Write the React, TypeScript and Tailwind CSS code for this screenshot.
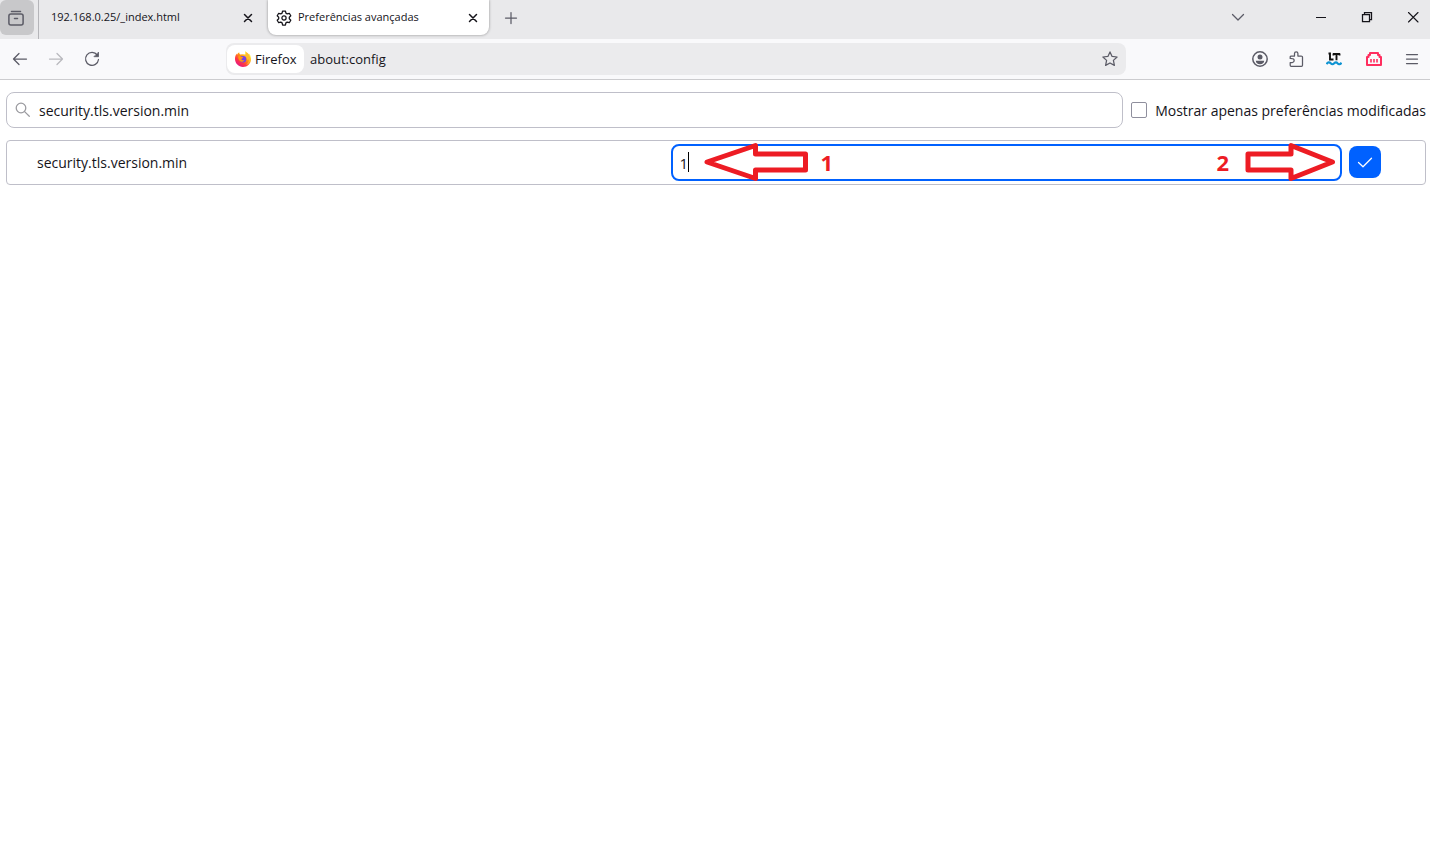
import { useState } from "react";
import type { ReactNode } from "react";

type IconProps = { className?: string; children: ReactNode };

function Icon({ className = "size-4", children }: IconProps) {
  return (
    <svg viewBox="0 0 16 16" className={className} fill="none" stroke="currentColor"
      strokeWidth="1.25" strokeLinecap="round" strokeLinejoin="round" aria-hidden="true">
      {children}
    </svg>
  );
}

function FirefoxLogo() {
  return (
    <svg viewBox="0 0 16 16" className="size-4 shrink-0" aria-hidden="true">
      <defs>
        <linearGradient id="flame" x1="0.85" y1="0.1" x2="0.2" y2="0.95">
          <stop offset="0.1" stopColor="#fff44f" />
          <stop offset="0.4" stopColor="#ff980e" />
          <stop offset="0.7" stopColor="#ff3647" />
          <stop offset="1" stopColor="#e31587" />
        </linearGradient>
      </defs>
      <path fill="url(#flame)" d="M10.3 0c-.5 1.3-.2 2.5.7 3.500l-3.400-.3-2.400.4C4.400 3 4.200 2.200 4.300 1.300 3.300 1.900 2.500 2.800 2 3.700 1.700 3.300 1.600 2.900 1.600 2.400.4 4.200 0 6.200 0 8.100 0 12.500 3.600 16 8 16s8-3.500 8-8c0-2.300-.8-4.200-2.100-5.400.1.500.1.900 0 1.300C13.200 2.200 11.300 1.600 10.300 0z" />
      <circle cx="8" cy="8.300" r="3.300" fill="#7542e5" />
      <path fill="#ff980e" d="M3.300 5.200c1.100-.5 2.300-.2 3 .7.800.1 1.700.1 1.900.3 0 .9-1.500 1.200-1.800 1.800.2 1.300 1.600 1.500 3 .9-.5 1.500-2.200 2.300-3.700 1.600C4.100 9.800 3 7.600 3.300 5.200z" />
      <path fill="#ffbd2e" d="M9.500 4.400c2 .5 3 2 2.700 4.700 1-.7 1.300-1.700 1.200-2.700 1.300 2.800.2 6-2.700 7.400 3.700-.6 5.200-3.900 4.400-6.900-.3-2.600-1.500-4.600-4.300-5.900 0 1.600.2 2.500-1.300 3.400z" />
    </svg>
  );
}

function LanguageToolLogo() {
  return (
    <svg viewBox="0 0 16 16" className="size-4" fill="none" aria-hidden="true">
      <path d="M2.500 2.500h1.500v6h3.500M7 3h7M10.500 3v6.200M7.500 2.500v2M13.500 2.500v2" stroke="#111" strokeWidth="1.900" />
      <path d="M.5 13c1.500-2 3-2 4.200-.7s2.300 1.300 3.500 0 2.400-1.300 3.400 0 2.400 1.200 4-.5" stroke="#0d93d2" strokeWidth="2.100" />
    </svg>
  );
}

function ContainerLogo() {
  return (
    <svg viewBox="0 0 16 16" className="size-4" fill="none" stroke="#ff2e5f" aria-hidden="true">
      <path d="M1 14V6h1.500V4H4V2h8v2h1.500v2H15v8z" strokeWidth="2" strokeLinejoin="round" />
      <path d="M5 8v3.500M8 8v3.500M11 8v3.500" strokeWidth="1.600" />
    </svg>
  );
}

function TabStrip() {
  return (
    <div className="flex h-[39px] items-start bg-[#e9e9eb] text-[11px] text-[#15141a]">
      <button aria-label="Histórico de abas" className="flex h-[35px] w-[34px] shrink-0 items-center justify-center rounded-md bg-[#c8c8ca] pr-0.5 text-[#5b5b66]">
        <Icon>
          <path d="M3.500 1.500h9" strokeWidth="1.500" />
          <rect x="0.900" y="4" width="14.200" height="11" rx="2" strokeWidth="1.500" />
          <path d="M6.500 8.500h3" strokeWidth="1.500" />
        </Icon>
      </button>
      <div className="ml-1 h-[39px] w-px shrink-0 bg-[#b5b5b9]" />
      <div className="flex h-[35px] w-[228px] items-center pr-[11px] pl-3">
        <span className="flex-1 truncate">192.168.0.25/_index.html</span>
        <button aria-label="Fechar aba">
          <Icon><path d="M4.500 4.500l7 7M11.500 4.500l-7 7" strokeWidth="1.500" /></Icon>
        </button>
      </div>
      <div className="ml-px flex h-[35px] w-[221px] items-center gap-1.5 rounded-b-lg bg-white px-2 shadow-[0_0_3px_rgba(0,0,0,0.4)]">
        <Icon>
          <path d="M6.600 1h2.800l.5 2.100 1.300.8 2.100-.6 1.500 2.500-1.500 1.500v1.400l1.500 1.500-1.500 2.500-2.100-.6-1.300.8L9.400 15H6.600l-.5-2.100-1.300-.8-2.100.6-1.500-2.500 1.500-1.500V7.300L1.200 5.800l1.500-2.500 2.100.6 1.300-.8z" />
          <circle cx="8" cy="8" r="2.100" />
        </Icon>
        <span className="flex-1 truncate">Preferências avançadas</span>
        <button aria-label="Fechar aba">
          <Icon><path d="M4.500 4.500l7 7M11.500 4.500l-7 7" strokeWidth="1.500" /></Icon>
        </button>
      </div>
      <button aria-label="Nova aba" className="ml-1 flex h-[35px] w-[35px] items-center justify-center text-[#5b5b66]">
        <Icon><path d="M8 2.500v11M2.500 8h11" /></Icon>
      </button>
      <button aria-label="Listar abas" className="mr-[42px] ml-auto flex h-[33px] w-9 items-center justify-center text-[#5b5b66]">
        <Icon><path d="M2.500 5.500L8 11l5.500-5.500" /></Icon>
      </button>
      <button aria-label="Minimizar" className="flex h-[33px] w-[46px] items-center justify-center">
        <Icon><path d="M3 8.500h10" strokeWidth="1" strokeLinecap="butt" /></Icon>
      </button>
      <button aria-label="Restaurar" className="flex h-[33px] w-[46px] items-center justify-center">
        <Icon><path d="M3.500 5.500h7v7h-7zM5.500 5.500v-2h7v7h-2" strokeLinejoin="miter" /></Icon>
      </button>
      <button aria-label="Fechar" className="flex h-[33px] w-10 items-center justify-center pl-1.5">
        <Icon><path d="M3.500 3.500l9.500 9.500M13 3.500L3.500 13" strokeWidth="1.100" /></Icon>
      </button>
    </div>
  );
}

function Toolbar() {
  return (
    <div className="flex h-[41px] items-center border-b border-[#cccccf] bg-[#f9f9fb] pl-0.5 text-[#5b5b66]">
      <button aria-label="Voltar" className="flex h-8 w-9 items-center justify-center">
        <Icon><path d="M14.500 8h-13M7 2.500L1.500 8 7 13.500" /></Icon>
      </button>
      <button aria-label="Avançar" disabled className="flex h-8 w-9 items-center justify-center text-[#b9b9be]">
        <Icon><path d="M1.500 8h13M9 2.500L14.500 8 9 13.500" /></Icon>
      </button>
      <button aria-label="Recarregar" className="flex h-8 w-9 items-center justify-center">
        <Icon>
          <path d="M13.300 4A6.500 6.500 0 1 0 14.500 8.500" />
          <path d="M14.500 1.500v4.200h-4.200z" fill="currentColor" strokeWidth="0.800" />
        </Icon>
      </button>
      <div className="mx-[116px] flex h-8 flex-1 items-center rounded-lg bg-[#ebebed] pr-2 pl-px text-[13px] text-[#15141a]">
        <button className="flex h-7 w-[77px] items-center gap-1 rounded-lg bg-white pl-2">
          <FirefoxLogo />
          <span className="pt-0.5">Firefox</span>
        </button>
        <input aria-label="Endereço" defaultValue="about:config" className="ml-1.5 min-w-0 flex-1 bg-transparent pt-0.5 outline-none" />
        <button aria-label="Adicionar aos favoritos" className="text-[#5b5b66]">
          <Icon><path d="M8 .9l2.100 4.500 5 .6-3.700 3.400 1 5L8 12l-4.400 2.400 1-5L.9 6l5-.6z" /></Icon>
        </button>
      </div>
      <button aria-label="Conta" className="flex h-8 w-9 items-center justify-center">
        <Icon>
          <circle cx="8" cy="8" r="7.200" strokeWidth="1.500" />
          <circle cx="8" cy="6" r="2.500" fill="currentColor" stroke="none" />
          <path d="M3.800 9.700h8.400c0 2.100-1.800 3.500-4.200 3.500s-4.200-1.400-4.200-3.500z" fill="currentColor" stroke="none" />
        </Icon>
      </button>
      <button aria-label="Extensões" className="flex h-8 w-9 items-center justify-center">
        <Icon><path d="M2.200 7.500V6a1 1 0 0 1 1-1H6.500V2.600a1.700 1.700 0 0 1 3.400 0V5h3.300a1.300 1.300 0 0 1 1.300 1.300v8a1 1 0 0 1-1 1H3.200a1 1 0 0 1-1-1v-2.800h2a1.900 1.900 0 0 0 0-3.900z" /></Icon>
      </button>
      <button aria-label="LanguageTool" className="flex h-8 w-10 items-center justify-center">
        <LanguageToolLogo />
      </button>
      <button aria-label="Extensão" className="flex h-8 w-10 items-center justify-center">
        <ContainerLogo />
      </button>
      <button aria-label="Menu" className="flex h-8 w-9 items-center justify-center">
        <Icon><path d="M2.500 3.500h11M2.500 8h11M2.500 12.500h11" /></Icon>
      </button>
    </div>
  );
}

function PrefRow({ name }: { name: string }) {
  const [value, setValue] = useState("1");

  return (
    <tr>
      <th scope="row" className="w-[46.8%] pl-[30px] text-left font-normal">{name}</th>
      <td>
        <div className="flex h-[43px] items-center">
          <div className="relative flex-1">
            <input aria-label={name} value={value} onChange={(e) => setValue(e.target.value)}
              className="block h-[37px] w-full rounded-lg border-2 border-[#0061ff] px-[7px] text-[15px] outline-none" />
            <span className="absolute top-2 left-[17px] h-5 w-px bg-black" />
            <svg viewBox="0 0 106 42" className="absolute -top-[3px] left-8 h-[42px] w-[106px]" fill="none" stroke="#ed1c24" strokeWidth="5" strokeLinejoin="round" aria-hidden="true">
              <path d="M4 21L52.500 4.500V13H102.500V29H52.500v8.500z" />
            </svg>
            <span className="absolute top-0 left-[150px] text-[22px] leading-9 font-bold text-[#ed1c24]">1</span>
            <span className="absolute top-0 right-[113px] text-[22px] leading-9 font-bold text-[#ed1c24]">2</span>
            <svg viewBox="0 0 94 42" className="absolute -top-[3px] right-1 h-[42px] w-[94px]" fill="none" stroke="#ed1c24" strokeWidth="5" strokeLinejoin="round" aria-hidden="true">
              <path d="M88.500 21L47 4.500V13H4V29h43v8.500z" />
            </svg>
          </div>
          <button aria-label="Salvar" className="mr-11 mb-px ml-[7px] flex size-8 items-center justify-center rounded-lg bg-[#0061ff] text-white">
            <Icon><path d="M1.500 8.500l4.500 4.300 8.500-8.600" /></Icon>
          </button>
        </div>
      </td>
    </tr>
  );
}

export default function App() {
  const [query, setQuery] = useState("security.tls.version.min");

  return (
    <div className="min-h-screen bg-white font-['Open_Sans','Noto_Sans',sans-serif] text-[#15141a]">
      <TabStrip />
      <Toolbar />
      <main className="pt-3 pr-1 pl-1.5 text-[14px]">
        <div className="flex items-center gap-2">
          <label className="flex h-9 flex-1 items-center gap-2 rounded-lg border border-[#bfbfc9] px-2">
            <Icon className="size-4 text-[#9a9a9f]">
              <circle cx="6" cy="6" r="4.800" />
              <path d="M9.600 9.600l4.700 4.700" />
            </Icon>
            <input aria-label="Pesquisar preferência" value={query} onChange={(e) => setQuery(e.target.value)}
              className="min-w-0 flex-1 outline-none" />
          </label>
          <label className="flex items-center gap-2 whitespace-nowrap">
            <input type="checkbox" className="size-4 appearance-none rounded-xs border border-[#8f8f9d] bg-white checked:bg-[#0061ff]" />
            Mostrar apenas preferências modificadas
          </label>
        </div>
        <div className="mt-3 rounded-sm border border-[#bfbfc9]">
          <table className="w-full table-fixed border-collapse">
            <tbody>
              <PrefRow name="security.tls.version.min" />
            </tbody>
          </table>
        </div>
      </main>
    </div>
  );
}
